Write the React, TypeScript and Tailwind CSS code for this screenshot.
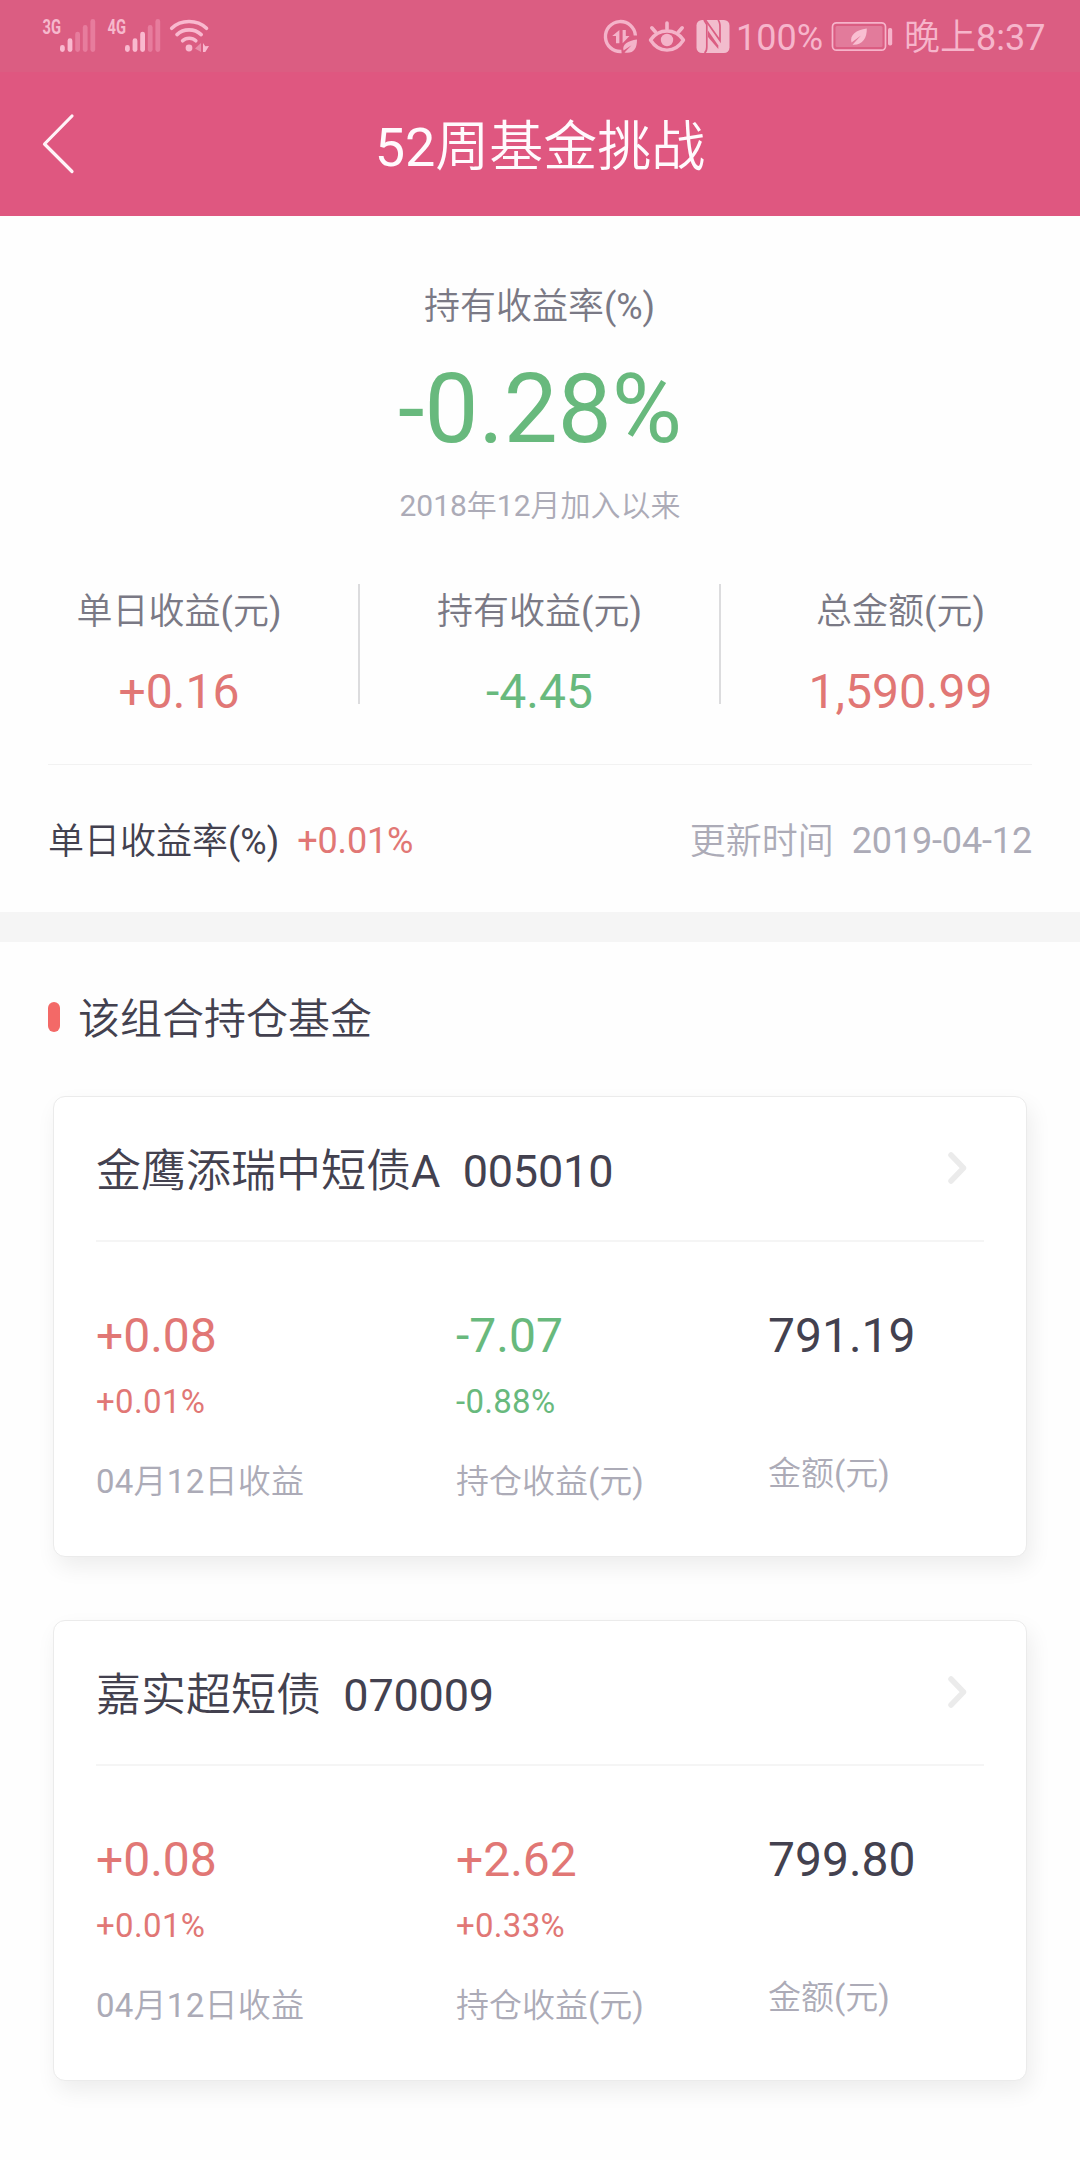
import React from "react";

interface Fund {
  code: string;
  name: string;
  dayProfit: string;
  dayRate: string;
  holdProfit: string;
  holdRate: string;
  amount: string;
}

const funds: Fund[] = [
  {
    code: "005010",
    name: "金鹰添瑞中短债A",
    dayProfit: "+0.08",
    dayRate: "+0.01%",
    holdProfit: "-7.07",
    holdRate: "-0.88%",
    amount: "791.19",
  },
  {
    code: "070009",
    name: "嘉实超短债",
    dayProfit: "+0.08",
    dayRate: "+0.01%",
    holdProfit: "+2.62",
    holdRate: "+0.33%",
    amount: "799.80",
  },
];

const stats = [
  { label: "单日收益(元)", value: "+0.16", color: "text-[#e17775]" },
  { label: "持有收益(元)", value: "-4.45", color: "text-[#68b97d]" },
  { label: "总金额(元)", value: "1,590.99", color: "text-[#e17775]" },
];

const profitColor = (value: string) => (value.startsWith("-") ? "text-[#68b97d]" : "text-[#e17775]");

function Signal({ label, level }: { label: string; level: number }) {
  const tops = [45, 38.3, 31.7, 25, 19];
  return (
    <svg width="65" height="72" viewBox="0 0 65 72" className="shrink-0">
      <text x="0.5" y="34" fontSize="20.5" fontWeight="700" textLength="18.5" lengthAdjust="spacingAndGlyphs" fill="#f6b9cd">
        {label}
      </text>
      {tops.map((y, i) => (
        <rect
          key={y}
          x={18 + i * 7.6}
          y={y}
          width="4.8"
          height={52 - y}
          rx="2.4"
          fill={i < level ? "#f9b9cf" : "#e77c9d"}
        />
      ))}
    </svg>
  );
}

function WifiIcon() {
  return (
    <svg width="42" height="72" viewBox="169 0 42 72" className="shrink-0" fill="none" stroke="#f9b9cf" strokeLinecap="round">
      <path d="M171.7 28.3C181 19.3 197 19.3 206.5 28.3" strokeWidth="3.6" />
      <path d="M177 34.6C183.5 28.3 194.5 28.3 201.2 34.6" strokeWidth="3.6" />
      <path d="M182.6 40.8C186 37.4 192.4 37.4 195.8 40.8" strokeWidth="3.6" />
      <circle cx="189" cy="48" r="3.4" fill="#f9b9cf" stroke="none" />
      <path d="M201 43V52L195 48.5Z" fill="#e98fab" stroke="none" />
      <path d="M203 43L205.3 46.3L209 46L205.3 52H203Z" fill="#f9b9cf" stroke="none" />
    </svg>
  );
}

function DataSaverIcon() {
  return (
    <svg width="36" height="72" viewBox="603 0 36 72" className="shrink-0" fill="none" stroke="#f4b3c9">
      <path d="M635.4 35.5A15 15 0 1 0 621.5 51.5" strokeWidth="3.4" />
      <path d="M619.4 30V43.2H616V36H612.2Z" fill="#f4b3c9" stroke="none" />
      <path d="M622.6 30H625.8V36H629.5L622.6 43.2Z" fill="#f4b3c9" stroke="none" />
      <path d="M637 39.5C627.5 40.8 622 44.5 623.5 50.5L631.5 45.2L624.5 52.6C633.5 54 637 49 637 39.5Z" fill="#f4b3c9" stroke="none" />
    </svg>
  );
}

function EyeIcon() {
  return (
    <svg width="38" height="72" viewBox="648 0 38 72" className="shrink-0" fill="none" stroke="#f4b3c9" strokeLinecap="round">
      <path d="M650.5 40C659 28 675 28 683.5 40C675 53.5 659 53.5 650.5 40Z" strokeWidth="3.4" strokeLinejoin="round" />
      <circle cx="667" cy="40" r="6.2" fill="#f4b3c9" stroke="none" />
      <path d="M667 23V29M651.8 27.8L655.5 32M682.2 27.8L678.5 32" strokeWidth="3.6" />
    </svg>
  );
}

function NfcIcon() {
  return (
    <svg width="34" height="72" viewBox="696.5 0 34 72" className="shrink-0">
      <rect x="697" y="20" width="33" height="33" rx="5.5" fill="#f2bccd" />
      <path d="M704.5 20L707.3 24.5V47C707.3 50 706.5 52 705 53" stroke="#db5d82" strokeWidth="1.7" fill="none" />
      <path d="M708.5 30.5L718.8 45.5V49L708.5 37Z" fill="#db5d82" />
      <path d="M706 20L720.5 40.5V27C720.5 23.5 720 21.5 718.5 20" stroke="#db5d82" strokeWidth="1.7" fill="none" />
    </svg>
  );
}

function BatteryIcon() {
  return (
    <svg width="62" height="72" viewBox="831 0 62 72" className="shrink-0">
      <rect x="832.5" y="22.8" width="53" height="27.4" rx="4" fill="none" stroke="#f6b3ca" strokeWidth="1.7" />
      <rect x="835.5" y="26" width="47" height="21" rx="1.5" fill="#e27b9b" />
      <rect x="888" y="28" width="4.2" height="17.5" rx="1.8" fill="#f6b3ca" />
      <path d="M866.8 28.5C856 30 849.5 35 851.5 42.5L861 35.5L852.5 44.8C862.5 45.5 867 38 866.8 28.5Z" fill="#f9bfd2" />
    </svg>
  );
}

function StatusBar() {
  return (
    <div className="flex h-[72px] items-start bg-[#db5d82] pl-[42px] text-[36px] leading-[76px] text-[#f6b5cb]">
      <Signal label="3G" level={2} />
      <Signal label="4G" level={3} />
      <div className="-ml-[3px]">
        <WifiIcon />
      </div>
      <div className="ml-auto flex items-start pr-9">
        <DataSaverIcon />
        <div className="ml-[9px]">
          <EyeIcon />
        </div>
        <div className="ml-[10px]">
          <NfcIcon />
        </div>
        <span className="ml-[6px] w-[87px] whitespace-nowrap">100%</span>
        <div className="ml-[8px]">
          <BatteryIcon />
        </div>
        <span className="ml-[11px] w-[140px] whitespace-nowrap">晚上8:37</span>
      </div>
    </div>
  );
}

function FundCard({ fund }: { fund: Fund }) {
  return (
    <div className="h-[461px] rounded-xl border border-[#ebebeb] bg-white px-[42px] pt-[41px] shadow-[4px_10px_22px_rgba(0,0,0,0.07)]">
      <div className="flex h-[104px] justify-between border-b-2 border-[#f5f5f5]">
        <h3 className="pt-px text-[45px] leading-[66px] whitespace-pre text-[#43414f]">
          {fund.name}
          {"  "}
          <span className="tracking-[-0.2px]">{fund.code}</span>
        </h3>
        <svg width="20" height="34" viewBox="0 0 20 34" className="mt-[13px] mr-4" fill="none">
          <path d="M3 4L15.5 17L3 30" stroke="#ebebeb" strokeWidth="5.5" strokeLinecap="round" strokeLinejoin="round" />
        </svg>
      </div>
      <div className="flex pt-[58px] text-[33px] leading-[48px]">
        <div className="w-[360px]">
          <p className={`text-[48px] leading-[72px] ${profitColor(fund.dayProfit)}`}>{fund.dayProfit}</p>
          <p className={`mt-1.5 tracking-[0.35px] ${profitColor(fund.dayRate)}`}>{fund.dayRate}</p>
          <p className="mt-8 tracking-[0.25px] text-[#acabb7]">04月12日收益</p>
        </div>
        <div className="w-[312px]">
          <p className={`text-[48px] leading-[72px] ${profitColor(fund.holdProfit)}`}>{fund.holdProfit}</p>
          <p className={`mt-1.5 tracking-[0.3px] ${profitColor(fund.holdRate)}`}>{fund.holdRate}</p>
          <p className="mt-8 text-[#acabb7]">持仓收益(元)</p>
        </div>
        <div>
          <p className="text-[48px] leading-[72px] text-[#43414f]">{fund.amount}</p>
          <p className="mt-[78px] text-[#acabb7]">金额(元)</p>
        </div>
      </div>
    </div>
  );
}

export default function App() {
  return (
    <div className="h-[2160px] w-[1080px] overflow-hidden bg-[#fefefe] font-[Roboto,'Noto_Sans_CJK_SC_DemiLight','Noto_Sans_CJK_SC',sans-serif]">
      <StatusBar />

      <header className="flex h-[144px] items-center bg-[#df5780] pl-[42px]">
        <svg width="33" height="62" viewBox="0 0 33 62" fill="none">
          <path d="M30 3L2.5 31L30 58.5" stroke="#fff3f8" strokeWidth="3.2" strokeLinecap="round" strokeLinejoin="round" />
        </svg>
        <h1 className="mr-[75px] flex-1 pt-2 text-center text-[54px] leading-[78px] text-[#fffafd]">52周基金挑战</h1>
      </header>

      {/* Portfolio summary */}
      <section className="pt-16 text-center">
        <p className="pr-px text-[36px] leading-[54px] text-[#7a7985]">持有收益率(%)</p>
        <p className="mt-[27px] text-[96px] leading-none text-[#68b97d]">-0.28%</p>
        <p className="mt-[26px] text-[30px] leading-[45px] text-[#acabb7]">2018年12月加入以来</p>

        <div className="mt-14 flex items-start">
          {stats.map((s, i) => (
            <React.Fragment key={s.label}>
              {i > 0 && <div className="h-[120px] w-0.5 bg-[#dcdcde]" />}
              <div className={i === 0 ? "w-[358px]" : "w-[359px]"}>
                <p className="pt-px text-[36px] leading-[54px] text-[#7a7985]">{s.label}</p>
                <p className={`mt-[17px] text-[48px] leading-[72px] ${s.color}`}>{s.value}</p>
              </div>
            </React.Fragment>
          ))}
        </div>
      </section>

      <div className="mx-12 mt-9 flex h-[148px] justify-between border-t border-[#f2f2f2] pt-[49px] text-[36px] leading-[54px]">
        <div className="flex gap-[18px]">
          <span className="pt-px text-[#43414f]">单日收益率(%)</span>
          <span className="tracking-[-0.15px] text-[#e17775]">+0.01%</span>
        </div>
        <div className="flex gap-[18px] text-[#acabb7]">
          <span className="pt-px">更新时间</span>
          <span className="tracking-[-0.15px]">2019-04-12</span>
        </div>
      </div>

      <div className="h-[30px] bg-[#f5f5f5]" />

      {/* Funds held by the portfolio */}
      <section className="pt-[46px]">
        <div className="flex items-center px-12">
          <div className="mr-[18px] mb-[5px] h-[30px] w-3 rounded-full bg-[#f36967]" />
          <h2 className="text-[42px] leading-[63px] text-[#43414f]">该组合持仓基金</h2>
        </div>
        <div className="mt-[45px] flex flex-col gap-[63px] px-[53px]">
          {funds.map((fund) => (
            <FundCard key={fund.code} fund={fund} />
          ))}
        </div>
      </section>
    </div>
  );
}
